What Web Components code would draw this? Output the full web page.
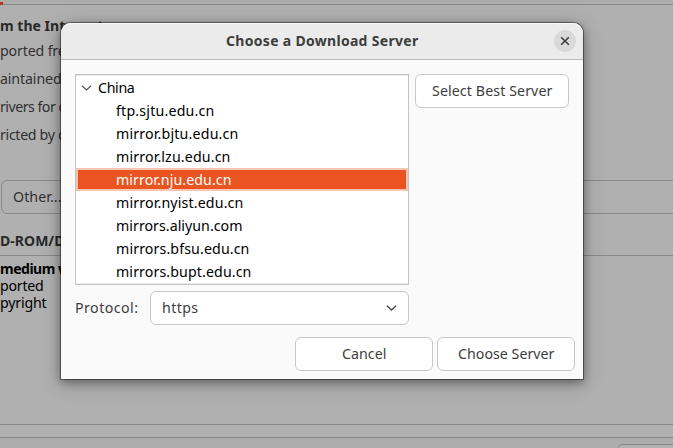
<!DOCTYPE html>
<html lang="en"><head><meta charset="utf-8"><title>Choose a Download Server</title>
<style>
html,body{margin:0;height:100%;overflow:hidden}
body{font:14.2px/23px "Noto Sans","Open Sans",sans-serif;color:#3d3d3d;background:#b0b0b0}
</style></head><body>
<sources-window></sources-window>
<server-dialog></server-dialog>
<script>
const root = (host, html) => { host.attachShadow({mode:'open'}).innerHTML = html; };

// Text run whose tracking is tuned so that it takes the given width.
customElements.define('fit-text', class extends HTMLElement {
  connectedCallback() {
    if (this.shadowRoot) return;
    root(this, `<style>:host{display:inline-block;white-space:nowrap;flex:none}span{display:inline-block}</style><span><slot></slot></span>`);
    const w = +this.getAttribute('w'), s = this.shadowRoot.querySelector('span'), n = this.textContent.length;
    this.style.width = w + 'px';
    s.style.letterSpacing = ((w + .5 - s.getBoundingClientRect().width) / n) + 'px';
  }
});

customElements.define('gtk-button', class extends HTMLElement {
  connectedCallback() {
    root(this, `<style>:host{box-sizing:border-box;display:flex;align-items:center;justify-content:center;height:34px;padding-bottom:2px;border:1px solid #c8c8c8;border-radius:6px;background:#fff;color:#3d3d3d}</style><slot></slot>`);
  }
});

customElements.define('gtk-select', class extends HTMLElement {
  connectedCallback() {
    root(this, `<style>:host{box-sizing:border-box;display:flex;align-items:center;justify-content:space-between;height:34px;border:1px solid #c8c8c8;border-radius:6px;background:#fff;padding:0 11px 0 11px}::slotted(*){padding-bottom:2px}svg{display:block}</style>
    <slot></slot><svg width="11" height="8" viewBox="0 0 11 8"><path d="M.9 1.8 5.5 6 10.1 1.8" fill="none" stroke="#444" stroke-width="1.3"/></svg>`);
  }
});

customElements.define('server-row', class extends HTMLElement {
  connectedCallback() {
    root(this, `<style>:host{box-sizing:border-box;display:flex;align-items:center;height:23px;padding-left:40px;color:#000}
    :host([group]){padding-left:5px;gap:6px}
    :host([selected]){background:#e95420;border:2px solid #f8c5b3;padding-left:38px;color:#fff;line-height:19px}
    svg{display:none;flex:none}:host([group]) svg{display:block}</style>
    <svg width="11" height="8" viewBox="0 0 11 8"><path d="M.9 1.8 5.5 6 10.1 1.8" fill="none" stroke="#555" stroke-width="1.2"/></svg><slot></slot>`);
  }
});

customElements.define('server-list', class extends HTMLElement {
  connectedCallback() {
    root(this, `<style>:host{box-sizing:border-box;display:block;height:211px;border:1px solid #c3c3c3;padding-top:1px;background:#fff;box-shadow:inset 0 1px #e9e9e9,inset 0 -1px #ededed}</style><slot></slot>`);
  }
});

customElements.define('title-bar', class extends HTMLElement {
  connectedCallback() {
    root(this, `<style>:host{box-sizing:border-box;display:grid;grid-template-columns:1fr auto 1fr;align-items:center;height:37px;padding:0 7px;background:#ebebeb;border-bottom:1px solid #bdbdbd;border-radius:10px 10px 0 0;box-shadow:inset 0 1px #fafafa;font-weight:700;font-size:14px}
    ::slotted(*){padding-bottom:2px}
    button{justify-self:end;width:22px;height:22px;border:0;border-radius:50%;padding:0;background:#d9d9d9;display:grid;place-items:center}</style>
    <i></i><slot></slot><button aria-label="Close"><svg width="10" height="10" viewBox="0 0 10 10"><path d="m1.2 1.2 7.6 7.6M8.8 1.2 1.2 8.8" stroke="#333" stroke-width="1.4"/></svg></button>`);
  }
});

customElements.define('server-dialog', class extends HTMLElement {
  connectedCallback() {
    const rows = [['ftp.sjtu.edu.cn',98],['mirror.bjtu.edu.cn',122],['mirror.lzu.edu.cn',114],['mirror.nju.edu.cn',115],['mirror.nyist.edu.cn',127],['mirrors.aliyun.com',126],['mirrors.bfsu.edu.cn',133],['mirrors.bupt.edu.cn',135]]
      .map(([t,w]) => `<server-row ${t==='mirror.nju.edu.cn'?'selected':''}><fit-text w="${w}">${t}</fit-text></server-row>`).join('');
    root(this, `<style>:host{position:absolute;left:61px;top:23px;width:522px;height:356px;background:#fafafa;border-radius:10px 10px 0 0;box-shadow:0 0 0 1px rgba(0,0,0,.42),0 3px 9px 1px rgba(0,0,0,.3),0 4px 20px 1px rgba(0,0,0,.22)}
    .top{display:grid;grid-template-columns:334px 154px;gap:6px;padding:14px 14px 0;align-items:start}
    .left{display:grid;gap:6px}.proto{display:flex;align-items:center;gap:12px}.proto gtk-select{flex:1}.proto>fit-text{padding-bottom:2px}
    .actions{display:grid;grid-template-columns:138px 138px;gap:4px;justify-content:end;padding:12px 8px 8px}</style>
    <title-bar><fit-text w="192">Choose a Download Server</fit-text></title-bar>
    <div class="top"><div class="left"><server-list><server-row group><fit-text w="36">China</fit-text></server-row>${rows}</server-list>
    <div class="proto"><fit-text w="63">Protocol:</fit-text><gtk-select><fit-text w="36">https</fit-text></gtk-select></div></div>
    <gtk-button><fit-text w="120">Select Best Server</fit-text></gtk-button></div>
    <div class="actions"><gtk-button><fit-text w="44">Cancel</fit-text></gtk-button><gtk-button><fit-text w="96">Choose Server</fit-text></gtk-button></div>`);
  }
});

customElements.define('sources-window', class extends HTMLElement {
  connectedCallback() {
    root(this, `<style>:host{display:flex;flex-direction:column;height:448px;overflow:hidden;color:#303030}
    :host>div,.tabs,.opts,.other,.cd,.media,.gap{flex:none}
    .tabs{box-sizing:border-box;height:5px;background:#adadad;border-bottom:1px solid #888;padding-top:2px}
    .tabs i{display:block;width:3px;height:3px;background:#b53a14}
    .h{font-weight:700;font-size:14px;color:#292929}
    .opts{height:175px;padding-top:9px;box-sizing:border-box}.opts .h{height:22px}
    .opts div{height:28px;display:flex;align-items:center}
    .other{box-sizing:border-box;height:34px;margin:0 -10px 0 1px;border:1px solid #888;border-radius:6px;display:flex;align-items:center;padding:0 0 2px 11px}
    .cd{height:41px;display:flex;align-items:end;box-sizing:border-box;padding-bottom:3px}
    .media{box-sizing:border-box;height:170px;border:solid #888;border-width:1px 0;padding-top:4px;line-height:17px;color:#000}
    .media div{height:17px}.gap{height:12px}
    .foot{flex:1;min-height:0;background:#adadad;border-top:1px solid #888;padding-top:6px;box-sizing:border-box}
    .foot i{display:block;box-sizing:border-box;height:34px;margin:0 -10px 0 617px;border:1px solid #888;border-radius:6px;background:#b2b2b2}</style>
    <div class="tabs"><i></i></div>
    <div class="opts"><div class="h"><fit-text w="103">m the Internet</fit-text></div><div><fit-text w="73">ported free</fit-text></div><div><fit-text w="61">aintained</fit-text></div><div><fit-text w="66">rivers for o</fit-text></div><div><fit-text w="64">ricted by c</fit-text></div></div>
    <div class="other"><fit-text w="48">Other...</fit-text></div>
    <div class="cd h"><fit-text w="64">D-ROM/D</fit-text></div>
    <div class="media"><div class="h" style="color:#000"><fit-text w="69">medium w</fit-text></div><div><fit-text w="43">ported</fit-text></div><div><fit-text w="46">pyright</fit-text></div></div>
    <div class="gap"></div><div class="foot"><i></i></div>`);
  }
});
</script></body></html>
